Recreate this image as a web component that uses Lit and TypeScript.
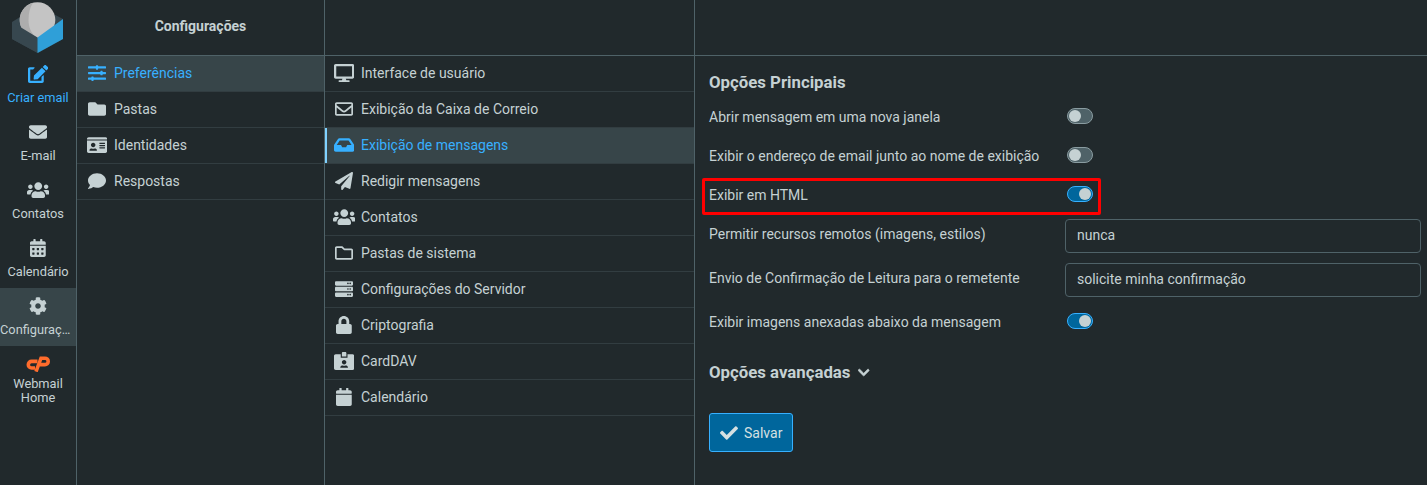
import { LitElement, html, css, svg } from "lit";
import { customElement } from "lit/decorators.js";

type Ic = { w: number; d: string };
const I: Record<string, Ic> = {
  edit: { w: 576, d: "M402.6 83.2l90.2 90.2c3.8 3.8 3.8 10 0 13.8L274.4 405.6l-92.8 10.3c-12.4 1.4-22.9-9.1-21.5-21.5l10.3-92.8L388.8 83.2c3.8-3.8 10-3.8 13.8 0zm162-22.9l-48.8-48.8c-15.2-15.2-39.9-15.2-55.2 0l-35.4 35.4c-3.8 3.8-3.8 10 0 13.8l90.2 90.2c3.8 3.8 10 3.8 13.8 0l35.4-35.4c15.2-15.3 15.2-40 0-55.2zM384 346.2V448H64V128h73.1c3.2 0 6.2-1.3 8.5-3.5l40-40c7.6-7.6 2.2-20.5-8.5-20.5H48C21.5 64 0 85.5 0 112v352c0 26.5 21.5 48 48 48h352c26.5 0 48-21.5 48-48V306.2c0-10.7-12.9-16-20.5-8.5l-40 40c-2.2 2.3-3.5 5.3-3.5 8.5z" },
  envelope: { w: 512, d: "M502.3 190.8c3.9-3.1 9.7-.2 9.7 4.7V400c0 26.5-21.5 48-48 48H48c-26.5 0-48-21.5-48-48V195.6c0-5 5.7-7.8 9.7-4.7 22.4 17.4 52.1 39.5 154.1 113.6 21.1 15.4 56.7 47.8 92.2 47.6 35.7.3 72-32.8 92.3-47.6 102-74.1 131.6-96.3 154-113.7zM256 320c23.2.4 56.6-29.2 73.4-41.4 132.7-96.3 142.8-104.7 173.4-128.7 5.8-4.5 9.2-11.5 9.2-18.9v-19c0-26.5-21.5-48-48-48H48C21.5 64 0 85.5 0 112v19c0 7.4 3.4 14.3 9.2 18.9 30.6 23.9 40.7 32.4 173.4 128.7 16.8 12.2 50.2 41.8 73.4 41.4z" },
  envelopeO: { w: 512, d: "M464 64H48C21.49 64 0 85.49 0 112v288c0 26.51 21.49 48 48 48h416c26.51 0 48-21.49 48-48V112c0-26.51-21.49-48-48-48zm0 48v40.805c-22.422 18.259-58.168 46.651-134.587 106.49-16.841 13.247-50.201 45.072-73.413 44.701-23.208.375-56.579-31.459-73.413-44.701C106.18 199.465 70.425 171.067 48 152.805V112h416zM48 400V214.398c22.914 18.251 55.409 43.862 104.938 82.646 21.857 17.205 60.134 55.186 103.062 54.955 42.717.231 80.509-37.199 103.053-54.947 49.528-38.783 82.032-64.401 104.947-82.653V400H48z" },
  users: { w: 640, d: "M96 224c35.3 0 64-28.7 64-64s-28.7-64-64-64-64 28.7-64 64 28.7 64 64 64zm448 0c35.3 0 64-28.7 64-64s-28.7-64-64-64-64 28.7-64 64 28.7 64 64 64zm32 32h-64c-17.6 0-33.5 7.1-45.1 18.6 40.3 22.1 68.9 62 75.1 109.4h66c17.7 0 32-14.3 32-32v-32c0-35.3-28.7-64-64-64zm-256 0c61.9 0 112-50.1 112-112S381.9 32 320 32 208 82.1 208 144s50.1 112 112 112zm76.8 32h-8.3c-20.8 10-43.9 16-68.5 16s-47.6-6-68.5-16h-8.3C179.6 288 128 339.6 128 403.2V432c0 26.5 21.5 48 48 48h288c26.5 0 48-21.5 48-48v-28.8c0-63.6-51.6-115.2-115.2-115.2zm-223.7-13.4C161.5 263.1 145.6 256 128 256H64c-35.3 0-64 28.7-64 64v32c0 17.7 14.3 32 32 32h65.9c6.3-47.4 34.9-87.3 75.2-109.4z" },
  calendarAlt: { w: 448, d: "M0 464c0 26.5 21.5 48 48 48h352c26.5 0 48-21.5 48-48V192H0v272zm320-196c0-6.6 5.4-12 12-12h40c6.6 0 12 5.4 12 12v40c0 6.6-5.4 12-12 12h-40c-6.6 0-12-5.4-12-12v-40zm0 128c0-6.6 5.4-12 12-12h40c6.6 0 12 5.4 12 12v40c0 6.6-5.4 12-12 12h-40c-6.6 0-12-5.4-12-12v-40zM192 268c0-6.6 5.4-12 12-12h40c6.6 0 12 5.4 12 12v40c0 6.6-5.4 12-12 12h-40c-6.6 0-12-5.4-12-12v-40zm0 128c0-6.6 5.4-12 12-12h40c6.6 0 12 5.4 12 12v40c0 6.6-5.4 12-12 12h-40c-6.6 0-12-5.4-12-12v-40zM64 268c0-6.6 5.4-12 12-12h40c6.6 0 12 5.4 12 12v40c0 6.6-5.4 12-12 12H76c-6.6 0-12-5.4-12-12v-40zm0 128c0-6.6 5.4-12 12-12h40c6.6 0 12 5.4 12 12v40c0 6.6-5.4 12-12 12H76c-6.6 0-12-5.4-12-12v-40zM400 64h-48V16c0-8.8-7.2-16-16-16h-32c-8.8 0-16 7.2-16 16v48H160V16c0-8.8-7.2-16-16-16h-32c-8.8 0-16 7.2-16 16v48H48C21.5 64 0 85.5 0 112v48h448v-48c0-26.5-21.5-48-48-48z" },
  calendar: { w: 448, d: "M12 192h424c6.6 0 12 5.4 12 12v260c0 26.5-21.5 48-48 48H48c-26.5 0-48-21.5-48-48V204c0-6.6 5.4-12 12-12zm436-44v-36c0-26.5-21.5-48-48-48h-48V12c0-6.6-5.4-12-12-12h-40c-6.6 0-12 5.4-12 12v52H160V12c0-6.6-5.4-12-12-12h-40c-6.6 0-12 5.4-12 12v52H48C21.5 64 0 85.5 0 112v36c0 6.6 5.4 12 12 12h424c6.6 0 12-5.4 12-12z" },
  cog: { w: 512, d: "M487.4 315.7l-42.6-24.6c4.3-23.2 4.3-47 0-70.2l42.6-24.6c4.9-2.8 7.1-8.6 5.5-14-11.1-35.6-30-67.8-54.7-94.6-3.8-4.1-10-5.1-14.8-2.3L380.8 110c-17.9-15.4-38.5-27.3-60.8-35.1V25.8c0-5.6-3.9-10.5-9.4-11.7-36.7-8.2-74.3-7.8-109.2 0-5.5 1.2-9.4 6.1-9.4 11.7V75c-22.2 7.9-42.8 19.8-60.8 35.1L88.7 85.5c-4.9-2.8-11-1.9-14.8 2.3-24.7 26.7-43.6 58.9-54.7 94.6-1.7 5.4.6 11.2 5.5 14L67.3 221c-4.3 23.2-4.3 47 0 70.2l-42.6 24.6c-4.9 2.8-7.1 8.6-5.5 14 11.1 35.6 30 67.8 54.7 94.6 3.8 4.1 10 5.1 14.8 2.3l42.6-24.6c17.9 15.4 38.5 27.3 60.8 35.1v49.2c0 5.6 3.9 10.5 9.4 11.7 36.7 8.2 74.3 7.8 109.2 0 5.5-1.2 9.4-6.1 9.4-11.7v-49.2c22.2-7.9 42.8-19.8 60.8-35.1l42.6 24.6c4.9 2.8 11 1.9 14.8-2.3 24.7-26.7 43.6-58.9 54.7-94.6 1.5-5.5-.7-11.3-5.6-14.1zM256 336c-44.1 0-80-35.9-80-80s35.9-80 80-80 80 35.9 80 80-35.9 80-80 80z" },
  sliders: { w: 512, d: "M496 384H160v-16c0-8.8-7.2-16-16-16h-32c-8.8 0-16 7.2-16 16v16H16c-8.8 0-16 7.2-16 16v32c0 8.8 7.2 16 16 16h80v16c0 8.8 7.2 16 16 16h32c8.8 0 16-7.2 16-16v-16h336c8.8 0 16-7.2 16-16v-32c0-8.8-7.2-16-16-16zm0-160h-80v-16c0-8.8-7.2-16-16-16h-32c-8.8 0-16 7.2-16 16v16H16c-8.8 0-16 7.2-16 16v32c0 8.8 7.2 16 16 16h336v16c0 8.8 7.2 16 16 16h32c8.8 0 16-7.2 16-16v-16h80c8.8 0 16-7.2 16-16v-32c0-8.8-7.2-16-16-16zm0-160H288V48c0-8.8-7.2-16-16-16h-32c-8.8 0-16 7.2-16 16v16H16C7.2 64 0 71.2 0 80v32c0 8.8 7.2 16 16 16h208v16c0 8.8 7.2 16 16 16h32c8.8 0 16-7.2 16-16v-16h208c8.8 0 16-7.2 16-16V80c0-8.8-7.2-16-16-16z" },
  folder: { w: 512, d: "M464 128H272l-64-64H48C21.49 64 0 85.49 0 112v288c0 26.51 21.49 48 48 48h416c26.51 0 48-21.49 48-48V176c0-26.51-21.49-48-48-48z" },
  folderO: { w: 512, d: "M464 128H272l-54.63-54.63c-6-6-14.14-9.37-22.63-9.37H48C21.49 64 0 85.49 0 112v288c0 26.51 21.49 48 48 48h416c26.51 0 48-21.49 48-48V176c0-26.51-21.49-48-48-48zm0 272H48V112h140.12l54.63 54.63c6 6 14.14 9.37 22.63 9.37H464v224z" },
  idCard: { w: 576, d: "M528 32H48C21.5 32 0 53.5 0 80v16h576V80c0-26.5-21.5-48-48-48zM0 432c0 26.5 21.5 48 48 48h480c26.5 0 48-21.5 48-48V128H0v304zm352-232c0-4.4 3.6-8 8-8h144c4.4 0 8 3.6 8 8v16c0 4.4-3.6 8-8 8H360c-4.4 0-8-3.6-8-8v-16zm0 64c0-4.4 3.6-8 8-8h144c4.4 0 8 3.6 8 8v16c0 4.4-3.6 8-8 8H360c-4.4 0-8-3.6-8-8v-16zm0 64c0-4.4 3.6-8 8-8h144c4.4 0 8 3.6 8 8v16c0 4.4-3.6 8-8 8H360c-4.4 0-8-3.6-8-8v-16zM176 192c35.3 0 64 28.7 64 64s-28.7 64-64 64-64-28.7-64-64 28.7-64 64-64zM67.1 396.2C75.5 370.5 99.6 352 128 352h8.2c12.3 5.1 25.7 8 39.8 8s27.6-2.9 39.8-8h8.2c28.4 0 52.5 18.5 60.9 44.2 3.2 9.9-5.2 19.8-15.6 19.8H82.7c-10.4 0-18.8-10-15.6-19.8z" },
  comment: { w: 512, d: "M256 32C114.6 32 0 125.1 0 240c0 49.6 21.4 95 57 130.7C44.5 421.1 2.7 466 2.2 466.5c-2.2 2.3-2.8 5.7-1.5 8.7S4.8 480 8 480c66.3 0 116-31.8 140.6-51.4 32.7 12.3 69 19.4 107.4 19.4 141.4 0 256-93.1 256-208S397.4 32 256 32z" },
  desktop: { w: 576, d: "M528 0H48C21.5 0 0 21.5 0 48v320c0 26.5 21.5 48 48 48h192l-16 48h-72c-13.3 0-24 10.7-24 24s10.7 24 24 24h272c13.3 0 24-10.7 24-24s-10.7-24-24-24h-72l-16-48h192c26.5 0 48-21.5 48-48V48c0-26.5-21.5-48-48-48zm-16 352H64V64h448v288z" },
  inbox: { w: 576, d: "M567.938 243.908L462.25 85.374A48.003 48.003 0 0 0 422.311 64H153.689a48 48 0 0 0-39.938 21.374L8.062 243.908A47.994 47.994 0 0 0 0 270.533V400c0 26.51 21.49 48 48 48h480c26.51 0 48-21.49 48-48V270.533a47.994 47.994 0 0 0-8.062-26.625zM162.252 128h251.497l85.333 128H376l-32 64H232l-32-64H76.918l85.334-128z" },
  plane: { w: 512, d: "M476 3.2L12.5 270.6c-18.1 10.4-15.8 35.6 2.2 43.2L121 358.4l287.3-253.2c5.5-4.9 13.3 2.6 8.6 8.3L176 407v80.5c0 23.6 28.5 32.9 42.5 15.8L282 426l124.6 52.2c14.2 6 30.4-2.9 33-18.2l72-432C515 7.8 493.3-6.8 476 3.2z" },
  server: { w: 512, d: "M480 160H32c-17.673 0-32-14.327-32-32V64c0-17.673 14.327-32 32-32h448c17.673 0 32 14.327 32 32v64c0 17.673-14.327 32-32 32zm-48-88c-13.255 0-24 10.745-24 24s10.745 24 24 24 24-10.745 24-24-10.745-24-24-24zm-64 0c-13.255 0-24 10.745-24 24s10.745 24 24 24 24-10.745 24-24-10.745-24-24-24zm112 248H32c-17.673 0-32-14.327-32-32v-64c0-17.673 14.327-32 32-32h448c17.673 0 32 14.327 32 32v64c0 17.673-14.327 32-32 32zm-48-88c-13.255 0-24 10.745-24 24s10.745 24 24 24 24-10.745 24-24-10.745-24-24-24zm-64 0c-13.255 0-24 10.745-24 24s10.745 24 24 24 24-10.745 24-24-10.745-24-24-24zm112 248H32c-17.673 0-32-14.327-32-32v-64c0-17.673 14.327-32 32-32h448c17.673 0 32 14.327 32 32v64c0 17.673-14.327 32-32 32zm-48-88c-13.255 0-24 10.745-24 24s10.745 24 24 24 24-10.745 24-24-10.745-24-24-24zm-64 0c-13.255 0-24 10.745-24 24s10.745 24 24 24 24-10.745 24-24-10.745-24-24-24z" },
  lock: { w: 448, d: "M400 224h-24v-72C376 68.2 307.8 0 224 0S72 68.2 72 152v72H48c-26.5 0-48 21.5-48 48v192c0 26.5 21.5 48 48 48h352c26.5 0 48-21.5 48-48V272c0-26.5-21.5-48-48-48zm-104 0H152v-72c0-39.7 32.3-72 72-72s72 32.3 72 72v72z" },
  idAlt: { w: 576, d: "M528 64H384v96H192V64H48C21.5 64 0 85.5 0 112v352c0 26.5 21.5 48 48 48h480c26.5 0 48-21.5 48-48V112c0-26.5-21.5-48-48-48zM288 224c35.3 0 64 28.7 64 64s-28.7 64-64 64-64-28.7-64-64 28.7-64 64-64zm93.3 224H194.7c-10.4 0-18.8-10-15.6-19.8 8.3-25.6 32.4-44.2 60.9-44.2h8.2c12.3 5.1 25.7 8 39.8 8s27.6-2.9 39.8-8h8.2c28.4 0 52.5 18.5 60.9 44.2 3.2 9.8-5.2 19.8-15.6 19.8zM352 32c0-17.7-14.3-32-32-32h-64c-17.7 0-32 14.3-32 32v96h128V32z" },
  check: { w: 512, d: "M173.898 439.404l-166.4-166.4c-9.997-9.997-9.997-26.206 0-36.204l36.203-36.204c9.997-9.998 26.207-9.998 36.204 0L192 312.69 432.095 72.596c9.997-9.997 26.207-9.997 36.204 0l36.203 36.204c9.997 9.997 9.997 26.206 0 36.204l-294.4 294.401c-9.998 9.997-26.207 9.997-36.204-.001z" },
  chevron: { w: 448, d: "M207.029 381.476L12.686 187.132c-9.373-9.373-9.373-24.569 0-33.941l22.667-22.667c9.357-9.357 24.522-9.375 33.901-.04L224 284.505l154.745-154.021c9.379-9.335 24.544-9.317 33.901.04l22.667 22.667c9.373 9.373 9.373 24.569 0 33.941L240.971 381.476c-9.373 9.372-24.569 9.372-33.942 0z" },
};

const icon = (n: string, size = 18) => {
  const i = I[n];
  return svg`<svg class="ic" viewBox="0 0 ${i.w} 512" width=${(i.w / 512) * size} height=${size} fill="currentColor" aria-hidden="true"><path d=${i.d}></path></svg>`;
};

const logo = svg`<svg class="logo" viewBox="0 0 76 56" width="76" height="56" aria-hidden="true">
  <path d="M12 22L38 6L63 19V39L38 53L12 39z" fill="#37474f"></path>
  <circle cx="37.5" cy="20" r="17.8" fill="#c4c4c4"></circle>
  <path d="M33 2.8A17.8 17.8 0 0 0 36.5 37.8C31 33 28.5 27 28.5 20S30 7 33 2.8z" fill="#adadad"></path>
  <path d="M12 22L37.5 37.5V53L12 39z" fill="#37474f"></path>
  <path d="M63 19L37.5 37.5V53L63 39z" fill="#2f9fd8"></path>
</svg>`;

const cp = svg`<svg class="ic" viewBox="0 0 24 16" width="24" height="16" fill="none" stroke="#ff6c2c" stroke-width="3.6" aria-hidden="true">
  <path d="M11.5 5.4H5.6a3.3 3.3 0 0 0 0 6.6H9"></path>
  <path d="M10 15.6L15 2.2H19a3.2 3.2 0 0 1 0 6.4H13.5"></path>
</svg>`;

const side = [
  { i: "edit", l: ["Criar email"], cls: "accent" },
  { i: "envelope", l: ["E-mail"] },
  { i: "users", l: ["Contatos"] },
  { i: "calendarAlt", l: ["Calendário"] },
  { i: "cog", l: ["Configurações"], cls: "sel" },
  { i: "cp", l: ["Webmail", "Home"], cls: "tight" },
];
const sections = [
  { i: "sliders", l: "Preferências", sel: true },
  { i: "folder", l: "Pastas" },
  { i: "idCard", l: "Identidades" },
  { i: "comment", l: "Respostas" },
];
const prefs = [
  { i: "desktop", l: "Interface de usuário" },
  { i: "envelopeO", l: "Exibição da Caixa de Correio" },
  { i: "inbox", l: "Exibição de mensagens", sel: true },
  { i: "plane", l: "Redigir mensagens" },
  { i: "users", l: "Contatos" },
  { i: "folderO", l: "Pastas de sistema" },
  { i: "server", l: "Configurações do Servidor" },
  { i: "lock", l: "Criptografia" },
  { i: "idAlt", l: "CardDAV" },
  { i: "calendar", l: "Calendário" },
];
const opts: { l: string; on?: boolean; v?: string }[] = [
  { l: "Abrir mensagem em uma nova janela", on: false },
  { l: "Exibir o endereço de email junto ao nome de exibição", on: false },
  { l: "Exibir em HTML", on: true },
  { l: "Permitir recursos remotos (imagens, estilos)", v: "nunca" },
  { l: "Envio de Confirmação de Leitura para o remetente", v: "solicite minha confirmação" },
  { l: "Exibir imagens anexadas abaixo da mensagem", on: true },
];

@customElement("app-root")
export class AppRoot extends LitElement {
  static styles = css`
    :host {
      display: block;
      height: 485px;
      overflow: hidden;
      background: #21292c;
      color: #c5d1d3;
      font-family: Roboto, "Liberation Sans", sans-serif;
      font-size: 14px;
    }
    .app {
      display: grid;
      grid-template-columns: 77px 248px 370px 1fr;
      height: 485px;
    }
    .ic { display: block; flex: none; }
    .sidebar { border-right: 1px solid #4f6268; min-width: 0; }
    .logo { display: block; }
    .nav {
      height: 58px;
      padding-top: 9px;
      box-sizing: border-box;
      display: flex;
      flex-direction: column;
      align-items: center;
      overflow: hidden;
    }
    .nav .ico { height: 18px; display: flex; align-items: center; justify-content: center; }
    .nav .lab {
      margin-top: 6px;
      font-size: 12.8px;
      line-height: 18px;
      width: 100%;
      text-align: center;
      white-space: nowrap;
      overflow: hidden;
      text-overflow: ellipsis;
    }
    .nav.accent { color: #37b0ff; }
    .nav.sel { background: #374549; }
    .nav.tight .lab { margin-top: 4px; line-height: 13.5px; }
    .nav.tight .lab + .lab { margin-top: 0; }
    .col { border-right: 1px solid #4f6268; min-width: 0; }
    .head {
      height: 52px;
      padding-bottom: 3px;
      border-bottom: 1px solid #4f6268;
      display: flex;
      align-items: center;
      justify-content: center;
      font-weight: 700;
      font-size: 14px;
    }
    .row {
      height: 36px;
      box-sizing: border-box;
      padding-bottom: 2px;
      border-bottom: 1px solid #323d41;
      display: flex;
      align-items: center;
      white-space: nowrap;
    }
    .row .cell { width: 37px; display: flex; justify-content: center; padding-left: 3px; box-sizing: border-box; }
    .row.sel { background: #374549; color: #37b0ff; }
    .prefs .row .cell { width: 36px; padding-left: 2px; }
    .prefs .row.sel { box-shadow: inset 2px 0 0 #7fd1ff; }
    .main { position: relative; padding: 0 6px 0 14px; min-width: 0; }
    .main-head { margin: 0 -6px 0 -14px; height: 55px; border-bottom: 1px solid #4f6268; }
    h2 {
      margin: 16px 0 0;
      font-size: 16.8px;
      font-weight: 700;
      line-height: 20px;
      height: 25px;
    }
    .form { display: grid; grid-template-columns: 356px 1fr; }
    .opt { display: grid; grid-column: 1 / 3; grid-template-columns: subgrid; align-items: center; height: 39px; }
    .opt.sel { height: 44px; }
    .opt.sel .name { padding-bottom: 4px; }
    .toggle {
      width: 26px;
      height: 16px;
      box-sizing: border-box;
      border-radius: 8px;
      border: 1px solid #8a9ca1;
      background: #4f6268;
      margin: 0 0 2px 2px;
      padding: 1px;
      display: flex;
    }
    .toggle.on { background: #00669c; border-color: #37b0ff; justify-content: flex-end; }
    .knob { width: 12px; height: 12px; border-radius: 50%; background: #c5d1d3; }
    .select {
      height: 34px;
      box-sizing: border-box;
      border: 1px solid #4f6268;
      border-radius: 4px;
      padding: 0 11px 2px;
      display: flex;
      align-items: center;
    }
    .adv {
      display: flex;
      align-items: center;
      gap: 8px;
      margin-top: 21px;
      font-size: 16.8px;
      font-weight: 700;
      line-height: 20px;
    }
    .adv .ic { stroke: currentColor; stroke-width: 24; }
    .btn {
      margin-top: 31px;
      width: 84px;
      height: 39px;
      box-sizing: border-box;
      background: #00669c;
      border: 1px solid #37b0ff;
      border-radius: 3px;
      display: flex;
      align-items: center;
      gap: 6px;
      padding-left: 10px;
      color: #d5e0e2;
    }
    .mark {
      position: absolute;
      left: 7px;
      top: 178px;
      width: 399px;
      height: 37px;
      box-sizing: border-box;
      border: 3px solid #ff0000;
      border-radius: 2px;
      pointer-events: none;
    }
  `;

  render() {
    return html`<div class="app">
      <aside class="sidebar">
        ${logo}
        ${side.map(
          (s) => html`<div class="nav ${s.cls ?? ""}">
            <div class="ico">${s.i === "cp" ? cp : icon(s.i)}</div>
            ${s.l.map((t) => html`<div class="lab">${t}</div>`)}
          </div>`
        )}
      </aside>
      <section class="col">
        <div class="head">Configurações</div>
        ${sections.map(
          (r) => html`<div class="row ${r.sel ? "sel" : ""}"><span class="cell">${icon(r.i)}</span>${r.l}</div>`
        )}
      </section>
      <section class="col prefs">
        <div class="head"></div>
        ${prefs.map(
          (r) => html`<div class="row ${r.sel ? "sel" : ""}"><span class="cell">${icon(r.i)}</span>${r.l}</div>`
        )}
      </section>
      <main class="main">
        <div class="main-head"></div>
        <h2>Opções Principais</h2>
        <div class="form">
          ${opts.map(
            (o) => html`<div class="opt ${o.v ? "sel" : ""}">
              <div class="name">${o.l}</div>
              ${o.v
                ? html`<div class="select">${o.v}</div>`
                : html`<div class="toggle ${o.on ? "on" : ""}"><div class="knob"></div></div>`}
            </div>`
          )}
        </div>
        <div class="adv">Opções avançadas ${icon("chevron", 13)}</div>
        <div class="btn">${icon("check")}Salvar</div>
        <div class="mark"></div>
      </main>
    </div>`;
  }
}
